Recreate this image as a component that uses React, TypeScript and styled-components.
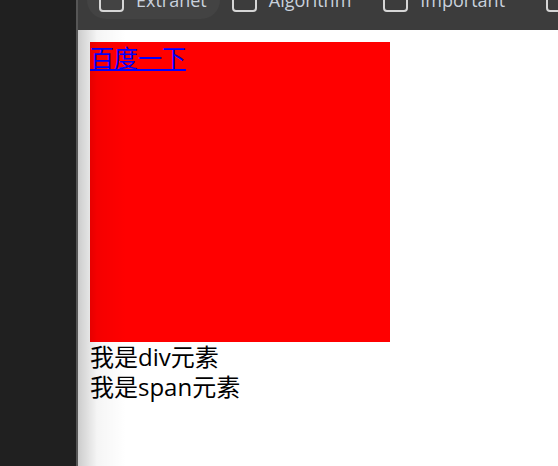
import React from "react";
import styled, { createGlobalStyle } from "styled-components";

const Global = createGlobalStyle`
  html, body { margin: 0; padding: 0; background: #ffffff; }
  body { width: 558px; height: 466px; overflow: hidden; }
`;

const Shell = styled.div`
  display: flex;
  width: 558px;
  height: 466px;
`;

const Sidebar = styled.div`
  width: 76px;
  flex: none;
  background: #202020;
  border-right: 2px solid #565656;
`;

const Main = styled.div`
  flex: 1;
  display: flex;
  flex-direction: column;
  min-width: 0;
`;

const TopBar = styled.div`
  height: 30px;
  flex: none;
  background: #3c3c3c;
  overflow: hidden;
`;

const ChipRow = styled.div`
  display: flex;
  align-items: center;
  margin-top: -20px;
  padding-left: 9px;
  white-space: nowrap;
`;

const Chip = styled.div<{ $active?: boolean; $pr: number }>`
  display: flex;
  align-items: center;
  gap: 12px;
  height: 39px;
  padding: 0 ${(p) => p.$pr}px 0 12px;
  border-radius: 19px;
  background: ${(p) => (p.$active ? "#434343" : "transparent")};
  color: #c9d1dc;
  font-family: "Open Sans", "Noto Sans", sans-serif;
  font-size: 18px;
`;

const Box = styled.span`
  width: 21px;
  height: 21px;
  border: 2px solid #d6d6d6;
  border-radius: 4px;
  flex: none;
`;

const Content = styled.div`
  position: relative;
  flex: 1;
  background: #ffffff;
  padding: 12px;
  font-family: "Segoe UI", "Open Sans", "Noto Sans CJK SC", sans-serif;
  font-size: 24px;
  line-height: 30px;
  color: #000;
  &::after {
    content: "";
    position: absolute;
    left: 0;
    top: 0;
    bottom: 0;
    width: 48px;
    pointer-events: none;
    background: linear-gradient(to right, rgba(0,0,0,0.2), rgba(0,0,0,0.04) 40%, rgba(0,0,0,0));
  }
`;

const RedBox = styled.div`
  width: 300px;
  height: 300px;
  background: #ff0000;
`;

const Link = styled.a`
  color: #0000ff;
  text-decoration: underline;
  font-family: "Noto Sans CJK SC", sans-serif;
`;

const Text = styled.div`
  font-family: "Open Sans", "Noto Sans CJK SC", sans-serif;
`;

const Span = styled.span`
  font-family: "Open Sans", "Noto Sans CJK SC", sans-serif;
`;

const chips = [
  { label: "Extranet", active: true, pr: 13 },
  { label: "Algorithm", active: false, pr: 20 },
  { label: "Important", active: false, pr: 29 },
  { label: "", active: false, pr: 0 },
];

export default function App() {
  return (
    <>
      <Global />
      <Shell>
        <Sidebar />
        <Main>
          <TopBar>
            <ChipRow>
              {chips.map((c, i) => (
                <Chip key={i} $active={c.active} $pr={c.pr}>
                  <Box />
                  {c.label && <span>{c.label}</span>}
                </Chip>
              ))}
            </ChipRow>
          </TopBar>
          <Content>
            <RedBox>
              <Link href="#">百度一下</Link>
            </RedBox>
            <Text>我是div元素</Text>
            <Span>我是span元素</Span>
          </Content>
        </Main>
      </Shell>
    </>
  );
}
